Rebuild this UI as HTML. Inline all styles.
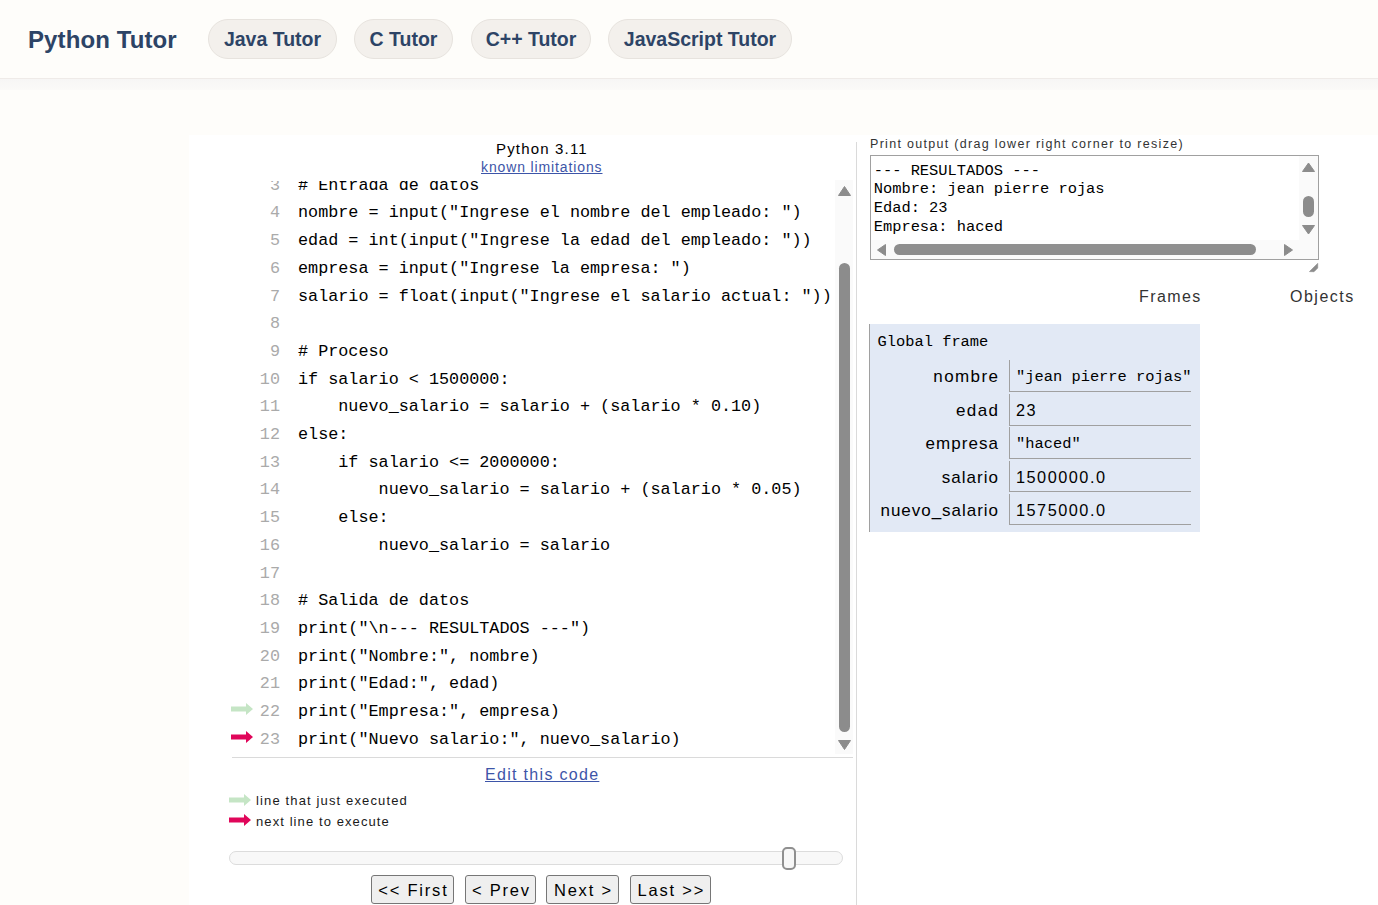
<!DOCTYPE html>
<html><head><meta charset="utf-8">
<style>
*{margin:0;padding:0;box-sizing:border-box}
html,body{width:1378px;height:905px;overflow:hidden;background:#fefdfa;font-family:"Liberation Sans",sans-serif}
#hdr{position:absolute;left:0;top:0;width:1378px;height:79px;background:#fefdfa;border-bottom:1px solid #efebe8}
#shadow{position:absolute;left:0;top:79px;width:1378px;height:11px;background:linear-gradient(#f7f6f5,#fbfaf8)}
.logo{position:absolute;left:28px;top:25.5px;font-weight:bold;font-size:24px;letter-spacing:0.1px;color:#2d4466;white-space:nowrap;line-height:28px}
.pill{position:absolute;top:19px;height:40px;border-radius:20px;background:#f3f0ec;border:1px solid #e7e3de;font-weight:bold;font-size:19.5px;color:#2d4466;line-height:38px;text-align:center;white-space:nowrap}
#main{position:absolute;left:189px;top:135px;width:1189px;height:770px;background:#fff}
.t{position:absolute;white-space:pre;line-height:1}
#code{position:absolute;left:231px;top:180px;width:622px;height:574px;overflow:hidden}
.row{position:absolute;left:0;width:604px;height:22px;line-height:16.8px}
.ln{position:absolute;left:0;top:0;width:49px;text-align:right;color:#aaa;font-family:"Liberation Mono",monospace;font-size:16.8px;white-space:pre}
.cl{position:absolute;left:67px;top:0;color:#000;font-family:"Liberation Mono",monospace;font-size:16.8px;white-space:pre}
.vtrack{position:absolute;background:#fafafa}
.thumb{position:absolute;background:#8c8c8c;border-radius:6px}
.sep{position:absolute;background:#dadada}
.btn{position:absolute;top:875px;height:29px;background:#efefef;border:1px solid #767676;border-radius:3px;font-size:16.5px;color:#000;line-height:29px;text-align:center;white-space:nowrap;letter-spacing:1.8px;text-indent:1.8px}
.vlabel{position:absolute;width:126px;left:872px;text-align:right;font-size:17px;letter-spacing:1.15px;color:#000;white-space:nowrap;line-height:17px}
.vcell{position:absolute;left:1009px;width:182px;border-left:1px solid #a0a0a0;border-bottom:1px solid #a0a0a0}
.vval{position:absolute;left:1016px;color:#000;white-space:pre}
.vval.mono{font-family:"Liberation Mono",monospace;font-size:15.4px;line-height:15.4px}
.vval.num{font-size:16.3px;letter-spacing:1.5px;line-height:16.3px}
</style></head><body>
<div id="hdr">
  <div class="logo">Python Tutor</div>
  <div class="pill" style="left:208px;width:129px">Java Tutor</div>
  <div class="pill" style="left:354px;width:99px">C Tutor</div>
  <div class="pill" style="left:471px;width:120px">C++ Tutor</div>
  <div class="pill" style="left:608px;width:184px">JavaScript Tutor</div>
</div>
<div id="shadow"></div>
<div id="main"></div>
<div class="t" style="left:496px;top:141px;font-size:15px;letter-spacing:1.17px;color:#000;">Python 3.11</div>
<div class="t" style="left:481px;top:160px;font-size:14px;letter-spacing:0.875px;color:#3d55a8;text-decoration:underline">known limitations</div>
<div id="code">
<div style="position:absolute;left:0;top:1px;width:604px;height:573px;overflow:hidden">
<div class="row" style="top:-3.30px"><span class="ln">3</span><span class="cl"># Entrada de datos</span></div>
<div class="row" style="top:24.40px"><span class="ln">4</span><span class="cl">nombre = input(&quot;Ingrese el nombre del empleado: &quot;)</span></div>
<div class="row" style="top:52.10px"><span class="ln">5</span><span class="cl">edad = int(input(&quot;Ingrese la edad del empleado: &quot;))</span></div>
<div class="row" style="top:79.80px"><span class="ln">6</span><span class="cl">empresa = input(&quot;Ingrese la empresa: &quot;)</span></div>
<div class="row" style="top:107.50px"><span class="ln">7</span><span class="cl">salario = float(input(&quot;Ingrese el salario actual: &quot;))</span></div>
<div class="row" style="top:135.20px"><span class="ln">8</span><span class="cl"></span></div>
<div class="row" style="top:162.90px"><span class="ln">9</span><span class="cl"># Proceso</span></div>
<div class="row" style="top:190.60px"><span class="ln">10</span><span class="cl">if salario &lt; 1500000:</span></div>
<div class="row" style="top:218.30px"><span class="ln">11</span><span class="cl">    nuevo_salario = salario + (salario * 0.10)</span></div>
<div class="row" style="top:246.00px"><span class="ln">12</span><span class="cl">else:</span></div>
<div class="row" style="top:273.70px"><span class="ln">13</span><span class="cl">    if salario &lt;= 2000000:</span></div>
<div class="row" style="top:301.40px"><span class="ln">14</span><span class="cl">        nuevo_salario = salario + (salario * 0.05)</span></div>
<div class="row" style="top:329.10px"><span class="ln">15</span><span class="cl">    else:</span></div>
<div class="row" style="top:356.80px"><span class="ln">16</span><span class="cl">        nuevo_salario = salario</span></div>
<div class="row" style="top:384.50px"><span class="ln">17</span><span class="cl"></span></div>
<div class="row" style="top:412.20px"><span class="ln">18</span><span class="cl"># Salida de datos</span></div>
<div class="row" style="top:439.90px"><span class="ln">19</span><span class="cl">print(&quot;\n--- RESULTADOS ---&quot;)</span></div>
<div class="row" style="top:467.60px"><span class="ln">20</span><span class="cl">print(&quot;Nombre:&quot;, nombre)</span></div>
<div class="row" style="top:495.30px"><span class="ln">21</span><span class="cl">print(&quot;Edad:&quot;, edad)</span></div>
<div class="row" style="top:523.00px"><span class="ln">22</span><span class="cl">print(&quot;Empresa:&quot;, empresa)</span></div>
<div class="row" style="top:550.70px"><span class="ln">23</span><span class="cl">print(&quot;Nuevo salario:&quot;, nuevo_salario)</span></div>
</div>
<svg style="position:absolute;left:0;top:523.3px" width="22" height="12" viewBox="0 0 22 12"><path d="M0 3.5H15V0L22 6L15 12V8.5H0Z" fill="#c5e5c5"/></svg>
<svg style="position:absolute;left:0;top:551px" width="22" height="12" viewBox="0 0 22 12"><path d="M0 3.5H15V0L22 6L15 12V8.5H0Z" fill="#e0065a"/></svg>
<div class="vtrack" style="left:604px;top:0;width:18px;height:574px"></div>
<svg style="position:absolute;left:607px;top:6px" width="13" height="10" viewBox="0 0 13 10"><path d="M6.5 0.5L12.5 9.5H0.5Z" fill="#8c8c8c" stroke="#8c8c8c" stroke-linejoin="round"/></svg>
<div class="thumb" style="left:608px;top:83px;width:11px;height:469px"></div>
<svg style="position:absolute;left:607px;top:560px" width="13" height="10" viewBox="0 0 13 10"><path d="M0.5 0.5H12.5L6.5 9.5Z" fill="#8c8c8c" stroke="#8c8c8c" stroke-linejoin="round"/></svg>
</div>
<div class="sep" style="left:232px;top:757px;width:621px;height:1px"></div>
<div class="sep" style="left:856px;top:142px;width:1px;height:763px"></div>
<div class="t" style="left:485px;top:767px;font-size:16px;letter-spacing:1.308px;color:#3d55a8;text-decoration:underline">Edit this code</div>
<svg style="position:absolute;left:229px;top:794.2px" width="22" height="12" viewBox="0 0 22 12"><path d="M0 3.5H15V0L22 6L15 12V8.5H0Z" fill="#c5e5c5"/></svg>
<div class="t" style="left:256px;top:794px;font-size:13px;letter-spacing:1.136px;color:#1a1a1a;">line that just executed</div>
<svg style="position:absolute;left:229px;top:814.1px" width="22" height="12" viewBox="0 0 22 12"><path d="M0 3.5H15V0L22 6L15 12V8.5H0Z" fill="#e0065a"/></svg>
<div class="t" style="left:256px;top:815px;font-size:13px;letter-spacing:1.09px;color:#1a1a1a;">next line to execute</div>
<div style="position:absolute;left:229px;top:851px;width:614px;height:14px;background:#f8f8f8;border:1px solid #dcdcdc;border-radius:7px"></div>
<div style="position:absolute;left:782px;top:847px;width:14px;height:23px;background:#f7f7f7;border:2px solid #8f8f8f;border-radius:5px"></div>
<div class="btn" style="left:371px;width:83px">&lt;&lt; First</div>
<div class="btn" style="left:465px;width:71px">&lt; Prev</div>
<div class="btn" style="left:546px;width:73px">Next &gt;</div>
<div class="btn" style="left:630px;width:81px">Last &gt;&gt;</div>

<div class="t" style="left:870px;top:138px;font-size:12.5px;letter-spacing:1.3px;color:#333;">Print output (drag lower right corner to resize)</div>
<div style="position:absolute;left:870px;top:155px;width:449px;height:105px;border:1px solid #a0a0a0;background:#fff;overflow:hidden">
  <div style="position:absolute;left:2.7px;top:5.7px;font-family:'Liberation Mono',monospace;font-size:15.4px;line-height:18.7px;white-space:pre;color:#000">--- RESULTADOS ---
Nombre: jean pierre rojas
Edad: 23
Empresa: haced</div>
  <div class="vtrack" style="left:0;top:84px;width:447px;height:19px"></div>
  <div class="vtrack" style="left:428px;top:0;width:19px;height:84px"></div>
</div>
<svg style="position:absolute;left:1301px;top:162px" width="15" height="11" viewBox="0 0 15 11"><path d="M7.5 1L13.5 9.5H1.5Z" fill="#8c8c8c" stroke="#8c8c8c" stroke-linejoin="round"/></svg>
<div class="thumb" style="left:1303px;top:196px;width:11px;height:21px"></div>
<svg style="position:absolute;left:1301px;top:224px" width="15" height="11" viewBox="0 0 15 11"><path d="M1.5 1.5H13.5L7.5 10Z" fill="#8c8c8c" stroke="#8c8c8c" stroke-linejoin="round"/></svg>
<svg style="position:absolute;left:876px;top:243px" width="11" height="14" viewBox="0 0 11 14"><path d="M1.5 7L9.5 1.5V12.5Z" fill="#8c8c8c" stroke="#8c8c8c" stroke-linejoin="round"/></svg>
<div class="thumb" style="left:894px;top:244px;width:362px;height:11px"></div>
<svg style="position:absolute;left:1283px;top:243px" width="11" height="14" viewBox="0 0 11 14"><path d="M9.5 7L1.5 1.5V12.5Z" fill="#8c8c8c" stroke="#8c8c8c" stroke-linejoin="round"/></svg>
<svg style="position:absolute;left:1308px;top:262px" width="11" height="11" viewBox="0 0 11 11"><path d="M1.5 9.6L9.7 1.4V6L6 9.7Z" fill="#8c8c8c" stroke="#8c8c8c" stroke-width="0.7" stroke-linejoin="round"/></svg>

<div class="t" style="left:1139px;top:289px;font-size:16px;letter-spacing:1.4px;color:#333;">Frames</div>
<div class="t" style="left:1290px;top:289px;font-size:16px;letter-spacing:1.5px;color:#333;">Objects</div>
<div style="position:absolute;left:869px;top:324px;width:331px;height:208px;background:#e2e9f5;border-left:1px solid #a0a0a0"></div>
<div class="t" style="left:877.5px;top:335px;font-family:'Liberation Mono',monospace;font-size:15.4px;color:#000">Global frame</div>
<div class="vcell" style="top:360px;height:32.0px"></div>
<div class="vlabel" style="top:367.8px;letter-spacing:1.4px;width:127.40px">nombre</div>
<div class="vval mono" style="top:370.3px">&quot;jean pierre rojas&quot;</div>
<div class="vcell" style="top:394px;height:31.5px"></div>
<div class="vlabel" style="top:401.8px;letter-spacing:1.37px;width:127.37px">edad</div>
<div class="vval num" style="top:401.8px">23</div>
<div class="vcell" style="top:427px;height:32.0px"></div>
<div class="vlabel" style="top:434.8px;letter-spacing:1.07px;width:127.07px">empresa</div>
<div class="vval mono" style="top:437.3px">&quot;haced&quot;</div>
<div class="vcell" style="top:461px;height:31.0px"></div>
<div class="vlabel" style="top:468.8px;letter-spacing:1.02px;width:127.02px">salario</div>
<div class="vval num" style="top:468.8px">1500000.0</div>
<div class="vcell" style="top:494px;height:31.0px"></div>
<div class="vlabel" style="top:501.8px;letter-spacing:0.97px;width:126.97px">nuevo_salario</div>
<div class="vval num" style="top:501.8px">1575000.0</div>
</body></html>
